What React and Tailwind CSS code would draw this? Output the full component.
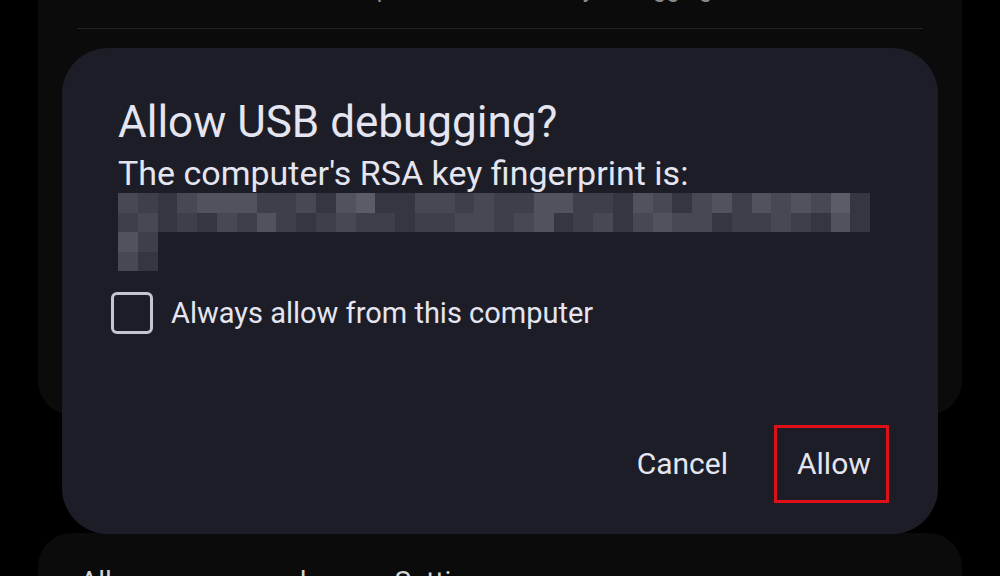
import React from 'react';

const shades = [
  'bg-[#2c2d37]',
  'bg-[#353640]',
  'bg-[#3e3f49]',
  'bg-[#474852]',
  'bg-[#51525c]',
  'bg-[#5b5c66]',
];

// pixelated fingerprint rows (index into shades)
const rows = [
  '3213444223145113323224422143134243435',
  '2312132421232212233234123134331223214',
  '4',
  '3',
];
const rowTails = ['1', '1', '2', '1'];

const Fingerprint = () => (
  <div className="flex flex-col">
    {rows.map((row, i) => (
      <div key={i} className="flex">
        {(row + rowTails[i]).split('').map((c, j) => (
          <div key={j} className={`h-[19.5px] w-[19.8px] ${shades[Number(c)]}`} />
        ))}
      </div>
    ))}
  </div>
);

const App = () => {
  return (
    <div className="relative h-[576px] w-[1000px] overflow-hidden bg-black font-['Roboto',sans-serif]">
      {/* settings list behind the dialog */}
      <div className="flex flex-col px-[38px]">
        <div className="-mt-[40px] h-[455px] rounded-b-[34px] bg-[#0b0b0b] px-[39px]">
          <p className="pt-[14px] text-[24px] leading-[30px] text-[#8a8a8a]">
            Revoke access from all computers authorized by debugging
          </p>
          <div className="mt-[24px] h-px bg-[#232323]" />
        </div>
        <div className="mt-[118px] h-[80px] rounded-t-[34px] bg-[#0b0b0b] px-[42px] pt-[32px]">
          <p className="text-[28px] leading-[34px] text-[#d6d6d6]">Allow screen overlays on Settings</p>
        </div>
      </div>

      {/* dialog */}
      <div className="absolute left-[62px] top-[48px] flex h-[486px] w-[876px] flex-col rounded-[46px] bg-[#1c1d27] pl-[56px] pr-[49px] pt-[50px] pb-[31px] text-[#e4e5f0]">
        <h1 className="text-[44px] leading-[48px]">Allow USB debugging?</h1>
        <p className="mt-[7px] text-[34px] leading-[40px]">The computer's RSA key fingerprint is:</p>
        <Fingerprint />
        <div className="-ml-[7px] mt-[21px] flex items-center gap-[18px]">
          <div className="h-[42px] w-[42px] rounded-[6px] border-[3.5px] border-[#c5c6d3]" />
          <span className="text-[29px] leading-[36px]">Always allow from this computer</span>
        </div>
        <div className="mt-auto flex items-center justify-end">
          <button className="mr-[46px] text-[30px] leading-[36px]">Cancel</button>
          <div className="flex h-[78px] w-[115px] items-center border-[3px] border-[#e0101a] pl-[20px]">
            <button className="text-[30px] leading-[36px]">Allow</button>
          </div>
        </div>
      </div>
    </div>
  );
};

export default App;
